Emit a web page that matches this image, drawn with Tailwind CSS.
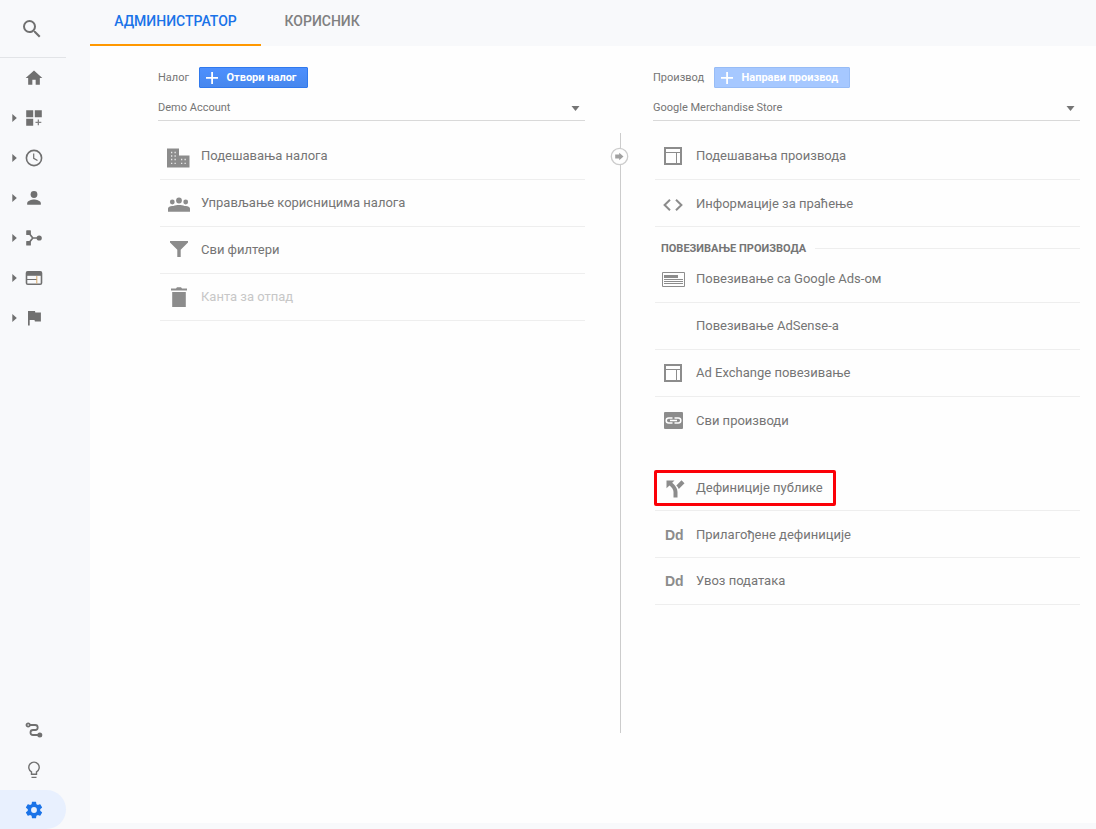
<!DOCTYPE html>
<html lang="sr">
<head>
<meta charset="utf-8">
<title>Администратор</title>
<script src="https://cdn.jsdelivr.net/npm/@tailwindcss/browser@4"></script>
</head>
<body class="flex h-[829px] w-[1096px] overflow-hidden bg-[#f8f9fb] font-[Roboto,sans-serif] text-[#757575]">
<nav class="flex w-[90px] shrink-0 flex-col text-[#707070]">
  <div class="flex h-[58px] w-[66px] items-center border-b border-[#e2e4e7] pl-[20px]">
    <svg class="h-[24px] w-[24px]" viewBox="0 0 24 24" fill="currentColor"><path d="M15.5 14h-.79l-.28-.27A6.47 6.47 0 0 0 16 9.500 6.500 6.500 0 1 0 9.500 16c1.610 0 3.090-.59 4.230-1.570l.27.28v.79l5 4.990L20.490 19l-4.990-5zm-6 0a4.500 4.500 0 1 1 0-9 4.500 4.500 0 0 1 0 9z"/></svg>
  </div>
  <div class="flex h-[40px] items-center pl-[24px]">
    <svg class="h-[20px] w-[20px]" viewBox="0 0 24 24" fill="currentColor"><path d="M10 20v-6h4v6h5v-8h3L12 3 2 12h3v8z"/></svg>
  </div>
  <div class="flex h-[40px] items-center pl-[12px]">
    <svg class="mr-[7px] h-[8px] w-[5px]" viewBox="0 0 5 8" fill="currentColor"><path d="M.3 0 4.800 4 .3 8z"/></svg>
    <svg class="h-[20px] w-[20px]" viewBox="0 0 20 20" fill="currentColor"><path d="M2.200 2.200h7v7h-7zM10.800 2.200h7v7h-7zM2.200 10.800h7v7h-7z"/><path d="M13.700 11.500h1.300v2.200h2.300V15H15v2.200h-1.300V15h-2.200v-1.300h2.200z" opacity=".85"/></svg>
  </div>
  <div class="flex h-[40px] items-center pl-[12px]">
    <svg class="mr-[7px] h-[8px] w-[5px]" viewBox="0 0 5 8" fill="currentColor"><path d="M.3 0 4.800 4 .3 8z"/></svg>
    <svg class="h-[20px] w-[20px]" viewBox="0 0 20 20" fill="none" stroke="currentColor"><circle cx="10" cy="10" r="7.600" stroke-width="1.600"/><path d="M9.700 5.500v4.800l3.800 2.300" stroke-width="1.200"/></svg>
  </div>
  <div class="flex h-[40px] items-center pl-[12px]">
    <svg class="mr-[7px] h-[8px] w-[5px]" viewBox="0 0 5 8" fill="currentColor"><path d="M.3 0 4.800 4 .3 8z"/></svg>
    <svg class="h-[20px] w-[20px]" viewBox="0 0 20 20" fill="currentColor"><circle cx="10" cy="6.500" r="3.400"/><path d="M3.200 16.800v-1.600c0-2.300 4.500-3.600 6.800-3.600s6.800 1.300 6.800 3.600v1.600z"/></svg>
  </div>
  <div class="flex h-[40px] items-center pl-[12px]">
    <svg class="mr-[7px] h-[8px] w-[5px]" viewBox="0 0 5 8" fill="currentColor"><path d="M.3 0 4.800 4 .3 8z"/></svg>
    <svg class="h-[20px] w-[20px]" viewBox="0 0 20 20" fill="currentColor"><rect x="2.200" y="2.300" width="4.700" height="4.700" rx=".6"/><rect x="2.200" y="12.900" width="4.700" height="4.700" rx=".6"/><circle cx="15.200" cy="10" r="2.600"/><path d="M5 5.200 8.800 10 5 14.800M8.800 10H14" fill="none" stroke="currentColor" stroke-width="1.700"/></svg>
  </div>
  <div class="flex h-[40px] items-center pl-[12px]">
    <svg class="mr-[7px] h-[8px] w-[5px]" viewBox="0 0 5 8" fill="currentColor"><path d="M.3 0 4.800 4 .3 8z"/></svg>
    <svg class="h-[20px] w-[20px]" viewBox="0 0 20 20" fill="none" stroke="currentColor"><rect x="2.500" y="3.800" width="15" height="12.400" rx="1.300" stroke-width="1.600"/><path d="M2.500 5.800h15" stroke-width="4"/><path d="M3 11.500h10" stroke-width="1"/><path d="M12.800 8v7.500" stroke-width="1" stroke="#d9a866"/></svg>
  </div>
  <div class="flex h-[40px] items-center pl-[12px]">
    <svg class="mr-[7px] h-[8px] w-[5px]" viewBox="0 0 5 8" fill="currentColor"><path d="M.3 0 4.800 4 .3 8z"/></svg>
    <svg class="h-[20px] w-[20px]" viewBox="0 0 20 20" fill="currentColor"><path d="M11.300 4.600 11 3H4v14.600h1.700V12h4.800l.4 1.500h6V4.600z"/></svg>
  </div>
  <div class="mt-auto flex h-[40px] items-center pl-[24px]">
    <svg class="h-[20px] w-[20px]" viewBox="0 0 20 20" fill="none" stroke="currentColor" stroke-width="1.800"><circle cx="4.200" cy="5" r="1.700"/><path d="M6 5h5.200a2.500 2.500 0 0 1 0 5H9a2.500 2.500 0 0 0 0 5h5"/><circle cx="15.800" cy="15" r="2.500" fill="currentColor" stroke="none"/></svg>
  </div>
  <div class="flex h-[40px] items-center pl-[24px]">
    <svg class="h-[20px] w-[20px]" viewBox="0 0 20 20" fill="none" stroke="currentColor" stroke-width="1.400"><path d="M7.500 14.300v-2.400a5.200 5.200 0 1 1 5 0v2.400zM7.500 17.400h5"/></svg>
  </div>
  <div class="flex h-[39px] w-[66px] items-center rounded-r-full bg-[#e8f0fe] pl-[24px] text-[#1a73e8]">
    <svg class="mt-px h-[20px] w-[20px]" viewBox="0 0 24 24" fill="currentColor"><path d="M19.430 12.980c.04-.32.07-.64.07-.98s-.03-.66-.07-.98l2.110-1.650c.19-.15.24-.42.12-.64l-2-3.460c-.12-.22-.39-.3-.61-.22l-2.490 1c-.52-.4-1.080-.73-1.690-.98l-.38-2.650A.488.488 0 0 0 14 2h-4c-.25 0-.46.18-.49.42l-.38 2.650c-.61.25-1.170.59-1.690.98l-2.490-1c-.23-.09-.49 0-.61.22l-2 3.460c-.13.22-.07.49.12.64l2.110 1.650c-.04.32-.07.65-.07.98s.03.66.07.98l-2.110 1.650c-.19.15-.24.42-.12.64l2 3.460c.12.22.39.3.61.22l2.490-1c.52.4 1.080.73 1.690.98l.38 2.650c.03.24.24.42.49.42h4c.25 0 .46-.18.49-.42l.38-2.650c.61-.25 1.170-.59 1.690-.98l2.490 1c.23.09.49 0 .61-.22l2-3.460c.12-.22.07-.49-.12-.64zM12 15.500a3.500 3.500 0 1 1 0-7 3.500 3.500 0 0 1 0 7z"/></svg>
  </div>
</nav>
<div class="flex flex-1 flex-col">
  <header class="flex h-[46px] shrink-0 text-[14px] font-medium">
    <div class="h-[46px] w-[171px] border-b-2 border-[#ff9800] pt-[11px] text-center leading-[20px] text-[#1a73e8]">АДМИНИСТРАТОР</div>
    <div class="pt-[11px] pl-[23.5px] leading-[20px] text-[#808080]">КОРИСНИК</div>
  </header>
  <main class="flex h-[777px] bg-[#fefefe] pl-[68px] text-[13px]">
    <section class="w-[427px] pt-[21px]">
      <div class="flex h-[21px] items-center text-[11px]">
        <span class="w-[41px] pt-[2px]">Налог</span>
        <button class="flex h-[21px] w-[109px] items-center rounded-[1px] border border-[#3079ed] bg-gradient-to-b from-[#4d90fe] to-[#4787ed] pl-[6px] font-bold text-white"><svg class="mr-[7.500px] mt-px h-[12px] w-[13px]" viewBox="0 0 13 12" fill="currentColor"><path d="M5.200 0h1.800v5H12v1.800H7V12H5.200V6.800H0V5h5.200z"/></svg><span class="pt-[2px]">Отвори налог</span></button>
      </div>
      <div class="flex h-[33px] items-center justify-between border-b border-[#d9d9d9] pt-[6px] pr-[5px] text-[11px]"><span class="pt-[2px]">Demo Account</span><svg class="mt-[2px] h-[5px] w-[9px]" viewBox="0 0 9 5" fill="currentColor"><path d="M0.500 0h8L4.500 5z"/></svg></div>
      <ul class="mt-[12px] ml-[2px]">
        <li class="flex h-[47px] items-center border-b border-[#eee]"><span class="mr-[4px] flex w-[37px] justify-center text-[#8c8c8c]"><svg class="mt-[3px] mr-[2px] h-[20px] w-[24px]" viewBox="0 0 24 20"><path d="M1 .5h12v7h10.500v12H1z" fill="currentColor"/><path d="M5 4.500h1.300M8.500 4.500h1.300M5 8h1.300M8.500 8h1.300M5 11.500h1.300M8.500 11.500h1.300M5 15.300h1.300M8.500 15.300h1.300M15 11.500h1.300M18.500 11.500h1.300M15 15.300h1.300M18.500 15.300h1.300" stroke="#e8e8e8" stroke-width="1.300"/></svg></span>Подешавања налога</li>
        <li class="flex h-[47px] items-center border-b border-[#eee]"><span class="mr-[4px] flex w-[37px] justify-center text-[#8c8c8c]"><svg class="mt-[2px] h-[15px] w-[22px]" viewBox="0 0 22 15" fill="currentColor"><circle cx="4.300" cy="5" r="2.400"/><circle cx="11" cy="3.500" r="2.900"/><circle cx="17.700" cy="5" r="2.400"/><path d="M0 14.800v-3.300c0-2.200 3.500-3 5.500-2.400 3-1.400 8-1.400 11 0 2-.6 5.500.2 5.500 2.400v3.300z"/></svg></span>Управљање корисницима налога</li>
        <li class="flex h-[47px] items-center border-b border-[#eee]"><span class="mr-[4px] flex w-[37px] justify-center text-[#8c8c8c]"><svg class="mb-px mt-[-1px] h-[16px] w-[18px]" viewBox="0 0 18 16" fill="currentColor"><path d="M0 0h18v1.500l-7.300 7.300V16H7.300V8.800L0 1.500z"/></svg></span>Сви филтери</li>
        <li class="flex h-[47px] items-center border-b border-[#eee] text-[#c7c7c7]"><span class="mr-[4px] flex w-[37px] justify-center text-[#8c8c8c]"><svg class="h-[20px] w-[16px]" viewBox="0 0 16 20" fill="currentColor"><path d="M0 1.500h5L6 .3h4l1 1.200h5v2H0zM1.200 5h13.600v15H1.200z"/></svg></span>Канта за отпад</li>
      </ul>
    </section>
    <div class="relative ml-[35px] mt-[87px] h-[600px] w-px bg-[#ccc]">
      <svg class="absolute -left-[10px] top-[14px] h-[19px] w-[19px]" viewBox="0 0 19 19"><circle cx="9.500" cy="9.500" r="8.200" fill="#fefefe" stroke="#ccc" stroke-width="1.300"/><path d="M5.200 7.500h4V5.800l4.300 3.700-4.300 3.700v-1.700h-4z" fill="#a0a0a0"/></svg>
    </div>
    <section class="ml-[32px] w-[427px] pt-[21px]">
      <div class="flex h-[21px] items-center text-[11px]">
        <span class="w-[61px] pt-[2px]">Производ</span>
        <button class="flex h-[21px] w-[136px] items-center rounded-[1px] border border-[#97bcf6] bg-[#a6c8ff] pl-[6px] font-bold text-white"><svg class="mr-[7.500px] mt-px h-[12px] w-[13px]" viewBox="0 0 13 12" fill="currentColor"><path d="M5.200 0h1.800v5H12v1.800H7V12H5.200V6.800H0V5h5.200z"/></svg><span class="pt-[2px]">Направи производ</span></button>
      </div>
      <div class="flex h-[33px] items-center justify-between border-b border-[#d9d9d9] pt-[6px] pr-[5px] text-[11px]"><span class="pt-[2px]">Google Merchandise Store</span><svg class="mt-[2px] h-[5px] w-[9px]" viewBox="0 0 9 5" fill="currentColor"><path d="M0.500 0h8L4.500 5z"/></svg></div>
      <ul class="mt-[12px] ml-[2px]">
        <li class="flex h-[47px] items-center border-b border-[#eee]"><span class="mr-[4px] flex w-[37px] justify-center text-[#8c8c8c]"><svg class="mr-px h-[18px] w-[18px]" viewBox="0 0 18 18" fill="none" stroke="currentColor"><rect x="1" y="1" width="16" height="16" stroke-width="2"/><path d="M2 5.500h14M12.500 6v10" stroke-width="1"/></svg></span>Подешавања производа</li>
        <li class="flex h-[47px] items-center border-b border-[#eee]"><span class="mr-[4px] flex w-[37px] justify-center text-[#8c8c8c]"><svg class="mt-[3px] mr-px h-[12px] w-[20px]" viewBox="0 0 20 12" fill="none" stroke="currentColor" stroke-width="2"><path d="M7 .8 1.600 6 7 11.200M13 .8 18.400 6 13 11.200"/></svg></span><span class="pt-px">Информације за праћење</span></li>
      </ul>
      <div class="flex h-[29px] items-center pt-[13px] pl-[8px] text-[11px] font-bold"><h2 class="w-[154px] pt-[2px] leading-[16px]">ПОВЕЗИВАЊЕ ПРОИЗВОДА</h2><span class="h-px flex-1 bg-[#eee]"></span></div>
      <ul class="ml-[2px]">
        <li class="flex h-[47px] items-center border-b border-[#eee]"><span class="mr-[4px] flex w-[37px] justify-center text-[#8c8c8c]"><svg class="h-[15px] w-[23px]" viewBox="0 0 23 15" fill="none" stroke="currentColor"><path d="M.5.5h22v14H.5zM2 7.500h19M2 9.500h19M2 11.500h19" stroke-width="1"/><path d="M2 4.500h14" stroke-width="3"/></svg></span>Повезивање са Google Ads-ом</li>
        <li class="flex h-[47px] items-center border-b border-[#eee] pl-[41px]">Повезивање AdSense-а</li>
        <li class="flex h-[47px] items-center border-b border-[#eee]"><span class="mr-[4px] flex w-[37px] justify-center text-[#8c8c8c]"><svg class="mr-px h-[18px] w-[18px]" viewBox="0 0 18 18" fill="none" stroke="currentColor"><rect x="1" y="1" width="16" height="16" stroke-width="2"/><path d="M2 5.500h14M12.500 6v10" stroke-width="1"/></svg></span>Ad Exchange повезивање</li>
        <li class="flex h-[47px] items-center"><span class="mr-[4px] flex w-[37px] justify-center text-[#8c8c8c]"><svg class="h-[17px] w-[19px]" viewBox="0 0 19 17"><rect width="19" height="17" rx="1" fill="currentColor"/><path d="M8.500 6H4.700a2.500 2.500 0 0 0 0 5h3.800M10.500 6h3.800a2.500 2.500 0 0 1 0 5h-3.800M6 8.500h7" fill="none" stroke="#fefefe" stroke-width="1.500"/></svg></span>Сви производи</li>
        <li class="relative mt-[20px] flex h-[47px] items-center border-b border-[#eee]"><div class="absolute -left-px top-[6px] h-[36px] w-[182px] rounded-[2px] border-3 border-[#fb0007]"></div><span class="mr-[4px] flex w-[37px] justify-center text-[#8c8c8c]"><svg class="mt-[3px] ml-[3px] h-[18px] w-[19px]" viewBox="0 0 19 18" fill="currentColor"><path d="M.5.5h8L6.200 2.800c3 2.700 5.300 5.500 5.300 9.200v5.500h-4V12c0-2.500-1.600-4.500-4-6.500L.5 8.300zM15.500.3l3 3-5.700 5.600c-.6-1.300-1.400-2.300-2.500-3.300z"/></svg></span><span class="pt-[2px]">Дефиниције публике</span></li>
        <li class="flex h-[47px] items-center border-b border-[#eee]"><span class="mr-[4px] w-[37px] pt-[2px] pl-[10px] font-[Liberation_Sans,sans-serif] text-[14px] font-bold text-[#8c8c8c]">Dd</span><span class="pt-[2px]">Прилагођене дефиниције</span></li>
        <li class="flex h-[47px] items-center border-b border-[#eee]"><span class="mr-[4px] w-[37px] pl-[10px] font-[Liberation_Sans,sans-serif] text-[14px] font-bold text-[#8c8c8c]">Dd</span>Увоз података</li>
      </ul>
    </section>
  </main>
</div>
</body>
</html>
